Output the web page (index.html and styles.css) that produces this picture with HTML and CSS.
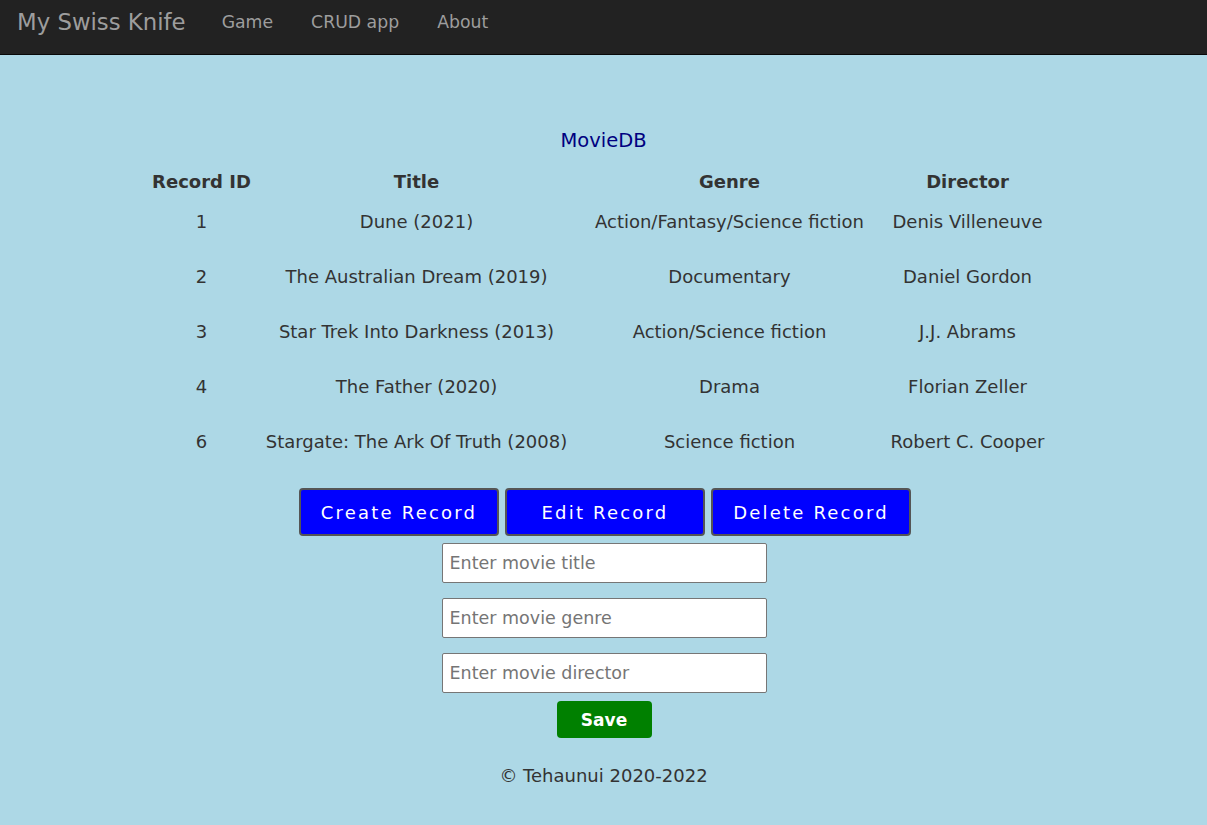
FILE: index.html
```html
<!DOCTYPE html>
<html>
<head>
<meta charset="utf-8">
<title>My Swiss Knife</title>
<link rel="stylesheet" href="styles.css">
</head>
<body>
<nav class="navbar">
  <a class="brand" href="#">My Swiss Knife</a>
  <a class="nav-link" href="#">Game</a>
  <a class="nav-link" href="#">CRUD app</a>
  <a class="nav-link" href="#">About</a>
</nav>
<main class="content">
  <h1 class="app-title">MovieDB</h1>
  <table class="movies">
    <colgroup>
      <col class="col-id">
      <col class="col-title">
      <col class="col-genre">
      <col class="col-director">
    </colgroup>
    <thead>
      <tr><th>Record ID</th><th>Title</th><th>Genre</th><th>Director</th></tr>
    </thead>
    <tbody>
      <tr><td>1</td><td>Dune (2021)</td><td>Action/Fantasy/Science fiction</td><td>Denis Villeneuve</td></tr>
      <tr><td>2</td><td>The Australian Dream (2019)</td><td>Documentary</td><td>Daniel Gordon</td></tr>
      <tr><td>3</td><td>Star Trek Into Darkness (2013)</td><td>Action/Science fiction</td><td>J.J. Abrams</td></tr>
      <tr><td>4</td><td>The Father (2020)</td><td>Drama</td><td>Florian Zeller</td></tr>
      <tr><td>6</td><td>Stargate: The Ark Of Truth (2008)</td><td>Science fiction</td><td>Robert C. Cooper</td></tr>
    </tbody>
  </table>
  <div class="actions">
    <button class="action-btn">Create Record</button>
    <button class="action-btn">Edit Record</button>
    <button class="action-btn">Delete Record</button>
  </div>
  <form class="record-form">
    <input class="field" type="text" placeholder="Enter movie title">
    <input class="field" type="text" placeholder="Enter movie genre">
    <input class="field" type="text" placeholder="Enter movie director">
    <button class="save-btn" type="button">Save</button>
  </form>
  <footer class="footer">© Tehaunui 2020-2022</footer>
</main>
</body>
</html>
```
FILE: styles.css
```css
html, body {
  margin: 0;
  padding: 0;
}
body {
  background: #add8e6;
  font-family: "DejaVu Sans", Verdana, sans-serif;
  font-size: 18px;
  color: #333;
  min-height: 825px;
}
.navbar {
  display: flex;
  align-items: flex-start;
  height: 55px;
  box-sizing: border-box;
  background: #222;
  border-bottom: 1px solid #080808;
  padding-left: 17px;
  padding-top: 8px;
}
.brand {
  color: #9d9d9d;
  text-decoration: none;
  font-size: 22.8px;
  line-height: 28px;
  margin-right: 36px;
}
.nav-link {
  color: #9d9d9d;
  text-decoration: none;
  font-size: 17.3px;
  line-height: 28px;
  margin-right: 38px;
}
.content {
  display: flex;
  flex-direction: column;
  align-items: center;
  padding-top: 72px;
}
.app-title {
  margin: 0 0 14px;
  font-size: 19.5px;
  font-weight: normal;
  color: navy;
  line-height: 28px;
}
.movies {
  border-collapse: collapse;
  table-layout: fixed;
  width: 906px;
  margin-bottom: 19px;
}
.col-id { width: 102px; }
.col-title { width: 328px; }
.col-genre { width: 298px; }
.col-director { width: 178px; }
.movies th {
  font-weight: bold;
  height: 25px;
  padding: 0;
  white-space: nowrap;
}
.movies td {
  text-align: center;
  height: 55px;
  padding: 0;
  white-space: nowrap;
}
.actions {
  display: flex;
  gap: 6px;
  padding-left: 3px;
}
.action-btn {
  width: 200px;
  height: 48px;
  background: blue;
  color: #fff;
  border: 2px solid #555;
  border-radius: 4px;
  font-family: "DejaVu Sans", Verdana, sans-serif;
  font-size: 18px;
  letter-spacing: 2.2px;
}
.record-form {
  display: flex;
  flex-direction: column;
  align-items: center;
  gap: 15px;
  margin-top: 7px;
  padding-left: 1px;
}
.field {
  width: 325px;
  height: 40px;
  box-sizing: border-box;
  border: 1px solid #767676;
  border-radius: 2px;
  padding: 0 7px;
  font-family: "DejaVu Sans", Verdana, sans-serif;
  font-size: 17.5px;
  background: #fff;
}
.field::placeholder {
  color: #757575;
}
.save-btn {
  width: 95px;
  height: 37px;
  margin-top: -7px;
  background: green;
  color: #fff;
  border: none;
  border-radius: 4px;
  font-family: "DejaVu Sans", Verdana, sans-serif;
  font-size: 17px;
  font-weight: bold;
}
.footer {
  margin-top: 27px;
  font-size: 18px;
  color: #333;
}
```
